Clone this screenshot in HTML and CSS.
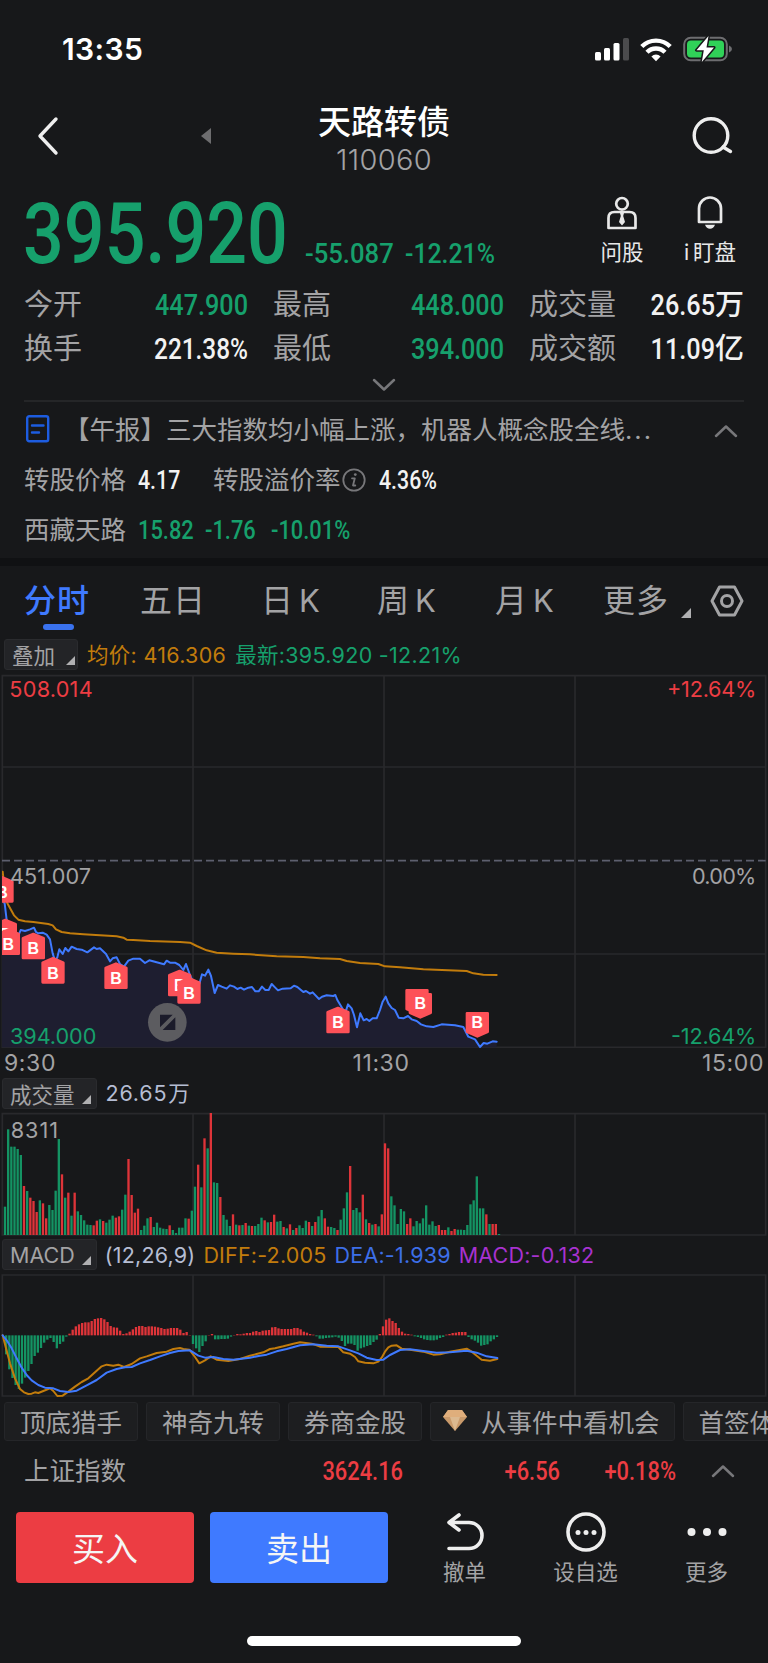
FILE: index.html
```html
<!DOCTYPE html>
<html lang="zh-CN">

  <head>
    <meta charset="UTF-8">
    <meta name="viewport" content="width=device-width, initial-scale=1.0">
    <title>天路转债 110060</title>
    <link rel="stylesheet" href="styles.css">
  </head>

  <body>
    <div class="status">
      <span class="clock">13:35</span>
      <div class="status-icons">
        <svg class="signal" width="34" height="24" viewBox="0 0 34 24">
          <rect x="0" y="15" width="6" height="8.500" rx="1.500" />
          <rect x="9" y="11" width="6" height="12.500" rx="1.500" />
          <rect x="18.500" y="6" width="6" height="17.500" rx="1.500" />
          <rect x="28" y="1" width="6" height="22.500" rx="1.500" fill="#4b4b4d" />
        </svg>
        <svg width="32" height="25" viewBox="0 0 32 25" fill="none" stroke="#fff" stroke-width="4.400">
          <path d="M1.800 9.500a20 20 0 0 1 28.400 0" />
          <path d="M7 15.300a12.600 12.600 0 0 1 18 0" />
          <path d="M16 24.300l-4.600-4.800a6.500 6.500 0 0 1 9.200 0z" fill="#fff" stroke="none" />
        </svg>
        <svg width="49" height="26" viewBox="0 0 49 26">
          <rect x="1.200" y="1.700" width="42.600" height="22.600" rx="6.500" fill="none" stroke="#6d6d70" stroke-width="2" />
          <rect x="4" y="4.500" width="37" height="17" rx="4" fill="#30d158" />
          <path d="M46 9.500q3 1.300 3 3.500t-3 3.500z" fill="#6d6d70" />
          <path d="M25.500 0L13.500 14.200h7.300L18.800 26 31 11.500h-7.500z" fill="#fff" stroke="#17181a" stroke-width="3" paint-order="stroke" stroke-linejoin="round" />
        </svg>
      </div>
    </div>

    <header class="header">
      <svg class="back" width="24" height="40" viewBox="0 0 24 40"><path d="M20 3L4 20l16 17" /></svg>
      <svg class="prev" width="10" height="16" viewBox="0 0 10 16"><path d="M10 0v16L0 8z" /></svg>
      <div class="title">
        <h1>天路转债</h1>
        <p>110060</p>
      </div>
      <svg class="search" width="42" height="42" viewBox="0 0 42 42"><circle cx="19" cy="19.500" r="16.800" /><path d="M31 31l7.500 4.500" /></svg>
    </header>

    <section class="quote">
      <span class="din price">395.920</span>
      <span class="din change">-55.087</span>
      <span class="din change rate">-12.21%</span>
      <div class="tool">
        <svg width="32" height="34" viewBox="0 0 32 34">
          <circle cx="16" cy="7.800" r="5.800" />
          <path d="M2.500 32V22q0-6 6-6h15q6 0 6 6v10z" />
          <path class="solid" d="M14 17h4l-.8 3 1.800 6-3 3.500-3-3.500 1.800-6z" />
        </svg>
        <span>问股</span>
      </div>
      <div class="tool watch">
        <svg width="32" height="34" viewBox="0 0 32 34">
          <path d="M5 26V12.500a11 11 0 0 1 22 0V26z" />
          <path class="solid" d="M11 28.800h10q-1.500 4-5 4t-5-4z" />
        </svg>
        <span><i>i</i>盯盘</span>
      </div>
    </section>

    <section class="stats">
      <span>今开</span><b class="din down">447.900</b>
      <span>最高</span><b class="din down">448.000</b>
      <span>成交量</span><b><i class="din">26.65</i>万</b>
      <span>换手</span><b class="din tight">221.38%</b>
      <span>最低</span><b class="din down">394.000</b>
      <span>成交额</span><b><i class="din">11.09</i>亿</b>
    </section>
    <div class="expand">
      <svg class="chevron" width="24" height="14" viewBox="0 0 24 14"><path d="M2 2l10 9.500L22 2" /></svg>
    </div>

    <section class="news">
      <svg width="24" height="28" viewBox="0 0 24 28"><rect x="1.200" y="1.200" width="21" height="25" rx="2" /><path d="M6 10.500h11.500M6 17.500h7" /></svg>
      <p>【午报】三大指数均小幅上涨，机器人概念股全线<i>...</i></p>
      <svg class="chevron" width="24" height="14" viewBox="0 0 24 14"><path d="M2 12l10-9.500L22 12" /></svg>
    </section>
    <section class="info">
      <span class="w-label">转股价格</span><b class="din w-price">4.17</b>
      <span>转股溢价率</span>
      <svg class="tip" width="24" height="24" viewBox="0 0 24 24"><circle cx="12" cy="12" r="10.700" /><path d="M10 10.300h2.800L11 17.500h2.300" /><circle class="dot" cx="13.300" cy="6.600" r="1.400" /></svg>
      <b class="din">4.36%</b>
    </section>
    <section class="info stock">
      <span class="w-label">西藏天路</span><b class="din down w-last">15.82</b><b class="din down w-diff">-1.76</b><b class="din down">-10.01%</b>
    </section>

    <nav class="tabs">
      <span class="active">分时</span>
      <span class="day5">五日</span>
      <span class="k">日<i>K</i></span>
      <span class="k">周<i>K</i></span>
      <span class="k month">月<i>K</i></span>
      <span class="others">更多</span>
      <svg class="corner" width="10" height="10" viewBox="0 0 10 10"><path d="M10 0v10H0z" /></svg>
      <svg class="hex" width="34" height="32" viewBox="0 0 34 32"><path d="M9.500 2h15L32 16l-7.500 14h-15L2 16z" /><circle cx="17" cy="16" r="5.500" /></svg>
    </nav>

    <div class="legend overlay">
      <button class="pick">叠加<svg class="corner" width="9" height="9" viewBox="0 0 10 10"><path d="M10 0v10H0z" /></svg></button>
      <span class="avg">均价: 416.306</span>
      <span class="down">最新:395.920 -12.21%</span>
    </div>
    <!-- charts use device pixels (3 per css pixel) -->
    <svg class="chart" width="768" height="374" viewBox="0 -498 2304 1122">
      <defs>
        <clipPath id="plot"><rect x="6" y="-498" width="2292" height="1122" /></clipPath>
        <g id="buy"><path d="M0 5L31 18V77H-31V18z" /><text y="66">B</text></g>
        <g id="buy-down"><path d="M0-6L31-20V-75H-31V-20z" /><text y="-30">B</text></g>
      </defs>
      <g class="grid">
        <path d="M7-493H2297V622H7zM7-219H2297M7 342H2297" />
        <path d="M579-493V622M1152-493V622M1725-493V622" />
      </g>
      <g clip-path="url(#plot)">
        <path id="area" />
        <path class="mid" d="M6 62H2297" />
        <polyline id="price" class="line blue" points="6,180 14,190 20,240 34,290 50,300 62,270 75,273 90,268 102,263 108,276 115,280 128,278 140,284 150,298 158,340 165,362 172,352 178,328 188,342 196,324 205,334 215,320 230,327 245,329 262,337 282,322 290,327 300,325 318,342 330,364 338,355 350,352 360,372 372,380 385,362 400,356 420,356 435,369 448,361 470,367 492,373 500,362 510,368 525,368 538,375 550,390 558,372 570,405 585,440 598,432 606,403 615,407 625,389 633,408 644,459 654,435 665,440 680,446 690,436 702,440 712,447 722,443 732,449 745,443 756,441 766,454 776,454 786,440 796,450 806,450 815,432 825,442 834,451 848,446 872,445 882,437 892,441 910,456 918,453 930,461 938,457 957,477 966,470 980,466 1000,468 1006,465 1012,480 1030,510 1038,512 1044,493 1055,505 1062,525 1071,562 1081,520 1091,541 1100,537 1108,543 1118,535 1130,535 1140,510 1148,485 1157,470 1165,490 1175,504 1185,510 1196,533 1210,535 1224,528 1235,538 1250,543 1263,553 1280,559 1300,561 1325,553 1365,556 1390,561 1405,590 1425,598 1440,621 1451,609 1462,611 1478,604 1490,605" />
        <polyline class="line orange" points="8,95 14,150 22,190 32,208 42,226 55,239 75,244 100,246 145,252 158,256 168,268 185,276 210,280 250,283 300,286 350,289 370,293 380,299 400,300 450,303 540,306 570,308 590,318 620,331 650,338 700,341 750,343 830,349 910,351 960,355 1020,357 1040,363 1080,369 1135,372 1155,379 1200,382 1270,388 1400,393 1420,400 1450,404 1490,405" />
        <g class="marks">
          <use href="#buy" x="6" y="107" />
          <use href="#buy" x="16" y="235" />
          <use href="#buy" x="25" y="264" />
          <use href="#buy" x="100" y="277" />
          <use href="#buy" x="159" y="350" />
          <use href="#buy" x="348" y="366" />
          <use href="#buy" x="539" y="388" />
          <use href="#buy" x="567" y="410" />
          <use href="#buy" x="1014" y="499" />
          <path d="M1251 520L1282 507V451H1220V507z" />
          <use href="#buy-down" x="1261" y="538" />
          <use href="#buy-down" x="1432" y="595" />
        </g>
      </g>
      <g class="zoom-btn">
        <circle cx="502" cy="547" r="58" />
        <path d="M480 524h38l-38 38zM526 532v38h-38z" />
      </g>
      <g class="axis">
        <text class="t-up" x="28" y="-429" textLength="250">508.014</text>
        <text class="t-up" x="2001" y="-429" textLength="268">+12.64%</text>
        <text x="30" y="131" textLength="243">451.007</text>
        <text x="2076" y="131" textLength="193">0.00%</text>
        <text class="t-down" x="30" y="612" textLength="259">394.000</text>
        <text class="t-down" x="2013" y="612" textLength="256">-12.64%</text>
      </g>
    </svg>
    <div class="times"><span>9:30</span><span class="noon">11:30</span><span>15:00</span></div>

    <div class="legend volume">
      <button class="pick">成交量<svg class="corner" width="9" height="9" viewBox="0 0 10 10"><path d="M10 0v10H0z" /></svg></button>
      <span>26.65<i>万</i></span>
    </div>
    <svg class="chart vol" width="768" height="124" viewBox="0 111 2304 372">
      <path class="grid" d="M7 116H2297V480H7zM579 116V480M1152 116V480M1725 116V480" />
      <g id="volume"></g>
      <g class="axis"><text x="32" y="188" textLength="142">8311</text></g>
    </svg>

    <div class="legend macd">
      <button class="pick">MACD<svg class="corner" width="9" height="9" viewBox="0 0 10 10"><path d="M10 0v10H0z" /></svg></button>
      <span>(12,26,9)</span>
      <span class="avg">DIFF:-2.005</span>
      <span class="dea">DEA:-1.939</span>
      <span class="bar">MACD:-0.132</span>
    </div>
    <svg class="chart" width="768" height="124" viewBox="0 114 2304 372">
      <path class="grid" d="M7 120H2297V483H7zM579 120V483M1152 120V483M1725 120V483" />
      <g id="macd"></g>
      <polyline class="line orange" points="8,301 18,340 30,385 45,430 60,462 72,472 85,477 95,476 105,472 115,474 130,468 150,460 160,468 172,483 188,482 205,470 225,455 245,441 265,430 285,412 305,394 320,389 340,392 355,389 372,396 395,387 420,370 440,364 470,354 500,350 520,342 540,339 550,342 568,344 585,366 598,385 615,376 632,364 650,374 685,378 720,372 750,362 770,357 790,352 810,342 825,340 850,334 880,326 900,322 935,326 960,335 1015,336 1030,352 1050,356 1065,366 1075,379 1095,383 1120,385 1135,380 1145,368 1155,350 1165,337 1175,332 1190,331 1205,341 1230,344 1270,350 1300,359 1320,358 1350,350 1400,341 1415,350 1430,362 1445,374 1470,377 1492,372" />
      <polyline class="line blue" points="8,301 20,316 35,340 50,370 65,398 80,420 95,436 115,450 135,458 160,460 180,468 205,471 230,467 260,451 290,435 320,413 350,402 375,397 395,396 420,385 450,375 480,364 510,354 535,348 570,346 595,362 615,368 640,366 670,372 700,374 750,368 780,362 800,359 830,349 860,342 900,331 940,328 980,332 1015,334 1050,346 1075,355 1100,368 1130,375 1150,374 1170,360 1200,345 1230,343 1270,348 1310,353 1350,352 1400,347 1430,353 1460,364 1492,369" />
    </svg>

    <div class="chips">
      <span>顶底猎手</span>
      <span>神奇九转</span>
      <span>券商金股</span>
      <span class="event"><svg width="24" height="21" viewBox="0 0 24 21"><path d="M5 0h14l5 7-12 14L0 7z" fill="#c99a6b" /><path d="M5 0h14l5 7H0z" fill="#dfae7c" /><path d="M7 7h10l-5 14z" fill="#dcb990" /></svg>从事件中看机会</span>
      <span>首签体</span>
    </div>

    <div class="index">
      <span>上证指数</span>
      <b class="din">3624.16</b>
      <b class="din">+6.56</b>
      <b class="din">+0.18%</b>
      <svg class="chevron" width="24" height="14" viewBox="0 0 24 14"><path d="M2 12l10-9.500L22 12" /></svg>
    </div>

    <footer class="actions">
      <button class="trade buy">买入</button>
      <button class="trade sell">卖出</button>
      <div class="act">
        <svg width="42" height="42" viewBox="0 0 42 42"><path d="M15 4L5 11.500 15 19M6 11.500h19a13 13 0 0 1 0 26H5" /></svg>
        <span>撤单</span>
      </div>
      <div class="act">
        <svg width="42" height="42" viewBox="0 0 42 42"><circle cx="21" cy="21" r="18" /><g class="solid"><circle cx="13" cy="21.500" r="2.500" /><circle cx="21" cy="21.500" r="2.500" /><circle cx="29" cy="21.500" r="2.500" /></g></svg>
        <span>设自选</span>
      </div>
      <div class="act">
        <svg width="42" height="42" viewBox="0 0 42 42"><g class="solid"><circle cx="5.500" cy="21" r="4" /><circle cx="21" cy="21" r="4" /><circle cx="36.500" cy="21" r="4" /></g></svg>
        <span>更多</span>
      </div>
    </footer>
    <div class="home"></div>

    <script>
      // positive = up (red), negative = down (green)
      const volume = [
        -85, -317, -265, -265, -258, -240, 147, -132, 112, 102, 69, -104, 95, 50, -90, -75, -133, -288, 182, -112,
        127, -58, 127, -71, -60, -44, -31, -30, 29, 43, -47, 42, -37, -46, -58, 52, 56, -76, -121, 228,
        120, 67, 79, -15, -28, -50, 54, -24, -37, -22, -19, -18, 29, -15, -6, -22, -22, -50, 49, -73,
        -145, 211, -143, 290, -260, 366, -158, -156, 114, -60, -46, -27, 62, -31, 29, -30, 36, -28, 27, -27,
        -33, -52, 44, -38, 39, 61, -40, -42, 24, -20, 32, -15, 21, -29, -21, -43, 39, -27, 39, -56,
        -75, 50, 25, -24, -21, 15, -46, -80, -128, 207, -75, -81, -68, 121, -47, 36, -31, 33, -26, 62,
        275, 260, -116, -89, -33, -78, -71, 33, 50, -26, -42, -35, -50, -89, -31, -41, -27, 30, 15, 15,
        -23, 12, 18, -16, -16, -15, -30, -92, -104, -176, -80, -80, 62, -33, 33, 33, -3,
      ];
      const macd = [
        -57, -102, -128, -149, -161, -145, -127, -107, -86, -62, -52, -38, -22, -13, -8, -20, -39, -26, -19, -4,
        5, 17, 27, 33, 37, 39, 39, 43, 49, 51, 52, 48, 40, 28, 24, 23, 14, 4, 6, 11,
        18, 25, 28, 28, 25, 27, 27, 26, 24, 22, 19, 20, 22, 22, 22, 17, 7, 10, 1, -26,
        -39, -50, -32, -18, 1, 4, -12, -12, -11, -11, -10, -4, 1, 4, 3, 5, 7, 7, 11, 13,
        10, 14, 15, 16, 24, 25, 21, 19, 19, 19, 19, 22, 22, 18, 11, 8, 4, 2, -3, -10,
        -10, -8, -7, -6, -4, -7, -17, -32, -25, -25, -29, -46, -39, -36, -32, -29, -20, -13, 4, 27,
        47, 51, 43, 37, 22, 11, 5, 4, 2, -3, -5, -8, -12, -14, -15, -15, -13, -8, -5, 2,
        4, 7, 8, 10, 10, 10, -5, -12, -16, -22, -31, -29, -27, -18, -12, -5,
      ];

      const drawBars = (id, data, x0, base, flip) => {
        document.getElementById(id).innerHTML = data.map((v, i) => {
          const h = Math.abs(v);
          const y = flip && v < 0 ? base : base - h;
          return `<rect class="${v > 0 ? 'b-up' : 'b-down'}" x="${x0 + i * 9.5 - 3.5}" y="${y}" width="7" height="${h}"/>`;
        }).join('');
      };

      drawBars('volume', volume, 15, 480, false);
      drawBars('macd', macd, 18.5, 301, true);

      // fill below the price line
      const points = document.getElementById('price').getAttribute('points');
      document.getElementById('area').setAttribute('d', `M6,622 L${points} V622z`);
    </script>
  </body>

</html>
```
FILE: styles.css
```css
:root {
  --bg: #17181a;
  --grey: #a3a3a5;
  --red: #ec3d43;
  --green: #16a06c;
  --blue: #3f7aff;
  --orange: #c27c0c;
}

* {
  box-sizing: border-box;
}

body {
  margin: 0;
  width: 768px;
  height: 1663px;
  overflow: hidden;
  background: var(--bg);
  color: var(--grey);
  font-family: Inter, "Noto Sans CJK SC", sans-serif;
}

h1,
p {
  margin: 0;
}

i {
  font-style: normal;
}

svg {
  display: block;
  flex: none;
  fill: none;
  stroke-linecap: round;
  stroke-linejoin: round;
}

button {
  border: 0;
  padding: 0;
  font-family: inherit;
}

/* narrow figures */
.din {
  display: inline-block;
  font-family: Roboto, "Noto Sans CJK SC", sans-serif;
  font-weight: 500;
  transform: scaleX(0.87);
  transform-origin: left center;
  white-space: nowrap;
}

.down {
  color: var(--green);
}

/* status bar */
.status {
  display: flex;
  justify-content: space-between;
  align-items: center;
  height: 98px;
  padding: 0 36px 0 62px;
}

.clock {
  color: #fff;
  font-size: 30px;
  font-weight: 600;
  letter-spacing: 0.4px;
}

.status-icons {
  display: flex;
  align-items: center;
  gap: 11px;
}

.status-icons svg {
  stroke-linecap: butt;
}

.status-icons .signal {
  fill: #fff;
}

/* header */
.header {
  display: flex;
  height: 86px;
  padding: 6px 34px 0 36px;
  align-items: flex-start;
}

.back {
  margin-top: 12px;
  stroke: #eee;
  stroke-width: 3.400;
}

.prev {
  margin: 24px 0 0 141px;
  fill: #6d6d6f;
}

.title {
  width: 200px;
  margin-left: 73px;
  text-align: center;
}

.title h1 {
  color: #fff;
  font-size: 33px;
  font-weight: 500;
  line-height: 37px;
}

.title p {
  font-size: 29px;
  font-weight: 300;
  letter-spacing: 0.3px;
  line-height: 37px;
}

.search {
  margin: 12px 0 0 auto;
  stroke: #eee;
  stroke-width: 3.400;
}

/* quote */
.quote {
  display: flex;
  height: 98px;
  padding-left: 23px;
}

.price {
  width: 282px;
  font-size: 85.500px;
  line-height: 100px;
  color: var(--green);
  transform: scaleX(0.84);
}

.change {
  width: 100px;
  margin-top: 55px;
  font-size: 28.500px;
  line-height: 30px;
  color: var(--green);
  transform: scaleX(0.9);
}

.rate {
  width: 172px;
  transform: scaleX(0.87);
}

.tool {
  display: flex;
  flex-direction: column;
  align-items: center;
  width: 90px;
  padding-top: 12px;
  color: #e8e8e8;
  font-size: 21.500px;
  line-height: 26px;
  gap: 9px;
  white-space: nowrap;
}

.watch {
  width: 86px;
}

.watch i {
  margin-right: 4px;
}

.tool svg {
  stroke: #e8e8e8;
  stroke-width: 2.700;
}

.tool .solid {
  fill: #e8e8e8;
  stroke: none;
}

/* stats grid */
.stats {
  display: grid;
  grid-template-columns: 100px 149px 100px 156px 100px 139px;
  grid-auto-rows: 43.500px;
  padding: 1px 0 0 24px;
  font-size: 29px;
  line-height: 44px;
}

.stats > * {
  white-space: nowrap;
}

.stats b {
  color: #f2f2f2;
  font-weight: 500;
  text-align: right;
  transform-origin: right center;
}

.stats b.din {
  margin-right: 25px;
}

.stats .tight {
  transform: scaleX(0.84);
}

.stats b.down {
  color: var(--green);
}

.stats b:nth-child(6n) {
  margin-right: 24px;
}

.stats i {
  transform-origin: right center;
}

.expand {
  display: flex;
  justify-content: center;
  align-items: center;
  height: 32px;
  margin: 0 24px;
  border-bottom: 2px solid #252628;
}

.chevron {
  stroke: #77777a;
  stroke-width: 2.500;
}

/* news and bond info */
.news {
  display: flex;
  align-items: center;
  height: 54px;
  padding: 0 30px 0 26px;
}

.news svg:first-child {
  stroke: #1d5ce0;
  stroke-width: 2.400;
}

.news p {
  flex: 1;
  padding: 0 0 4px 14px;
  font-size: 25.500px;
  white-space: nowrap;
}

.news p i {
  letter-spacing: 2px;
}

.news .chevron {
  margin-top: 3px;
}

.info {
  display: flex;
  align-items: center;
  height: 48px;
  padding-left: 24px;
  font-size: 25.500px;
}

.info span {
  padding-bottom: 5px;
}

.info b {
  font-size: 26px;
  color: #f2f2f2;
  transform: scaleX(0.82);
}

.info b.down {
  color: var(--green);
  transform: scaleX(0.84);
}

.w-label {
  width: 114px;
}

.w-price {
  width: 75px;
}

.w-last {
  width: 67px;
}

.w-diff {
  width: 66px;
}

.tip {
  margin: 0 13px 0 1px;
  stroke: #77777a;
  stroke-width: 1.800;
}

.tip .dot {
  fill: #77777a;
  stroke: none;
}

.stock {
  height: 62px;
  padding-bottom: 2px;
  border-bottom: 8px solid #101113;
}

/* period tabs */
.tabs {
  display: flex;
  height: 73px;
  padding: 11px 24px 0 24px;
  font-size: 32px;
  line-height: 48px;
  white-space: nowrap;
}

.tabs span {
  display: flex;
  flex: none;
  width: 117px;
  letter-spacing: 1px;
}

.tabs span.day5 {
  width: 121px;
}

.tabs span.k {
  gap: 5px;
  width: 116px;
}

.tabs span.month {
  width: 110px;
  padding-left: 2px;
}

.tabs .k i {
  font-size: 31px;
  font-weight: 400;
}

.tabs span.active {
  flex-direction: column;
  width: 116px;
  color: var(--blue);
  font-weight: 500;
}

.tabs .active::after {
  content: "";
  width: 31px;
  height: 6px;
  margin: -1px 0 0 19px;
  border-radius: 3px;
  background: #3a72ee;
}

.tabs span.others {
  width: 78px;
}

.corner {
  fill: #b0b0b2;
}

.tabs .corner {
  margin-top: 31px;
}

.hex {
  margin: 8px 0 0 auto;
  stroke: var(--grey);
  stroke-width: 3;
}

/* chart legends */
.legend {
  display: flex;
  align-items: center;
  gap: 9px;
  height: 31px;
  margin-left: 2px;
  font-size: 21.500px;
  letter-spacing: 0.3px;
  color: #b5bdd3;
  white-space: nowrap;
}

.overlay {
  gap: 9px;
  margin: 0 0 4px 4px;
}

.overlay span {
  padding-bottom: 3px;
}

.overlay .down {
  color: var(--green);
}

.volume {
  letter-spacing: 0.8px;
}

.volume span {
  padding-bottom: 4px;
}

.volume i {
  margin-left: 1px;
}

.macd {
  gap: 8px;
  margin: 3px 0 3px 2px;
  letter-spacing: 0.2px;
}

.pick {
  display: flex;
  align-items: center;
  height: 31px;
  padding: 0 5px 0 7px;
  border: 1px solid #2a2b2e;
  border-radius: 3px;
  background: #232427;
  color: var(--grey);
  font-size: 21.500px;
}

.pick .corner {
  margin: 12px 0 0 7px;
}

.overlay .pick {
  padding-right: 2px;
}

.overlay .corner {
  margin-left: 11px;
}

.legend .avg {
  color: var(--orange);
}

.legend .dea {
  color: #3d6fe8;
}

.legend .bar {
  color: #a832d0;
}

/* charts */
.grid,
.grid path {
  stroke: #29292c;
  stroke-width: 5;
  stroke-linejoin: miter;
}

.mid {
  stroke: #5d5f6e;
  stroke-width: 5;
  stroke-dasharray: 24 12;
  stroke-linecap: butt;
}

#area {
  fill: #1e1e30;
}

.line {
  stroke-width: 6;
}

.blue {
  stroke: var(--blue);
}

.orange {
  stroke: var(--orange);
}

.b-up {
  fill: #de3439;
}

.b-down {
  fill: #149363;
}

.marks > path,
#buy path,
#buy-down path {
  fill: #fd5158;
  stroke: #fd5158;
  stroke-width: 8;
}

#buy text,
#buy-down text {
  fill: #fff;
  font-family: "Liberation Sans", sans-serif;
  font-size: 48px;
  font-weight: 700;
  text-anchor: middle;
}

.zoom-btn circle {
  fill: #5c5c60;
}

.zoom-btn path {
  fill: #1b1b2a;
}

.axis text {
  fill: var(--grey);
  font-size: 65px;
}

.axis .t-up {
  fill: var(--red);
}

.axis .t-down {
  fill: var(--green);
}

.times {
  display: flex;
  justify-content: space-between;
  height: 30px;
  padding: 0 4px;
  font-size: 23px;
  letter-spacing: 0.6px;
  line-height: 30px;
}

.noon {
  padding-left: 4px;
}

.vol {
  margin-top: 3px;
}

/* feature chips */
.chips {
  display: flex;
  gap: 8px;
  margin: 5px 0 0 4px;
  overflow: hidden;
  font-size: 25.500px;
}

.chips span {
  display: flex;
  flex: none;
  align-items: center;
  height: 39px;
  padding: 0 15px 2px;
  border: 1px solid #252629;
  border-radius: 3px;
  background: #1d1e20;
}

.chips .event {
  gap: 14px;
  padding: 0 14px 2px 12px;
}

/* index row */
.index {
  display: grid;
  grid-template-columns: 200px 179px 157px 116px 24px;
  align-items: center;
  height: 60px;
  padding-left: 24px;
  font-size: 25.500px;
}

.index span {
  padding-bottom: 5px;
}

.index b {
  color: var(--red);
  font-size: 26px;
  text-align: right;
  transform: scaleX(0.84);
  transform-origin: right center;
}

.index .chevron {
  margin-left: 35px;
}

/* bottom actions */
.actions {
  display: flex;
  height: 124px;
  padding: 11px 0 0 16px;
}

.trade {
  width: 178px;
  height: 71px;
  margin-right: 16px;
  padding-bottom: 2px;
  border-radius: 4px;
  color: #f5f5f5;
  font-size: 33px;
}

.buy {
  background: var(--red);
}

.sell {
  background: var(--blue);
}

.act {
  display: flex;
  flex-direction: column;
  align-items: center;
  width: 121px;
  margin-top: -1px;
  font-size: 21.500px;
  line-height: 28px;
  gap: 5px;
}

.act svg {
  stroke: #eee;
  stroke-width: 3.600;
}

.act .solid {
  fill: #eee;
  stroke: none;
}

.home {
  width: 274px;
  height: 10px;
  margin: 11px auto 0;
  border-radius: 5px;
  background: #fff;
}
```
